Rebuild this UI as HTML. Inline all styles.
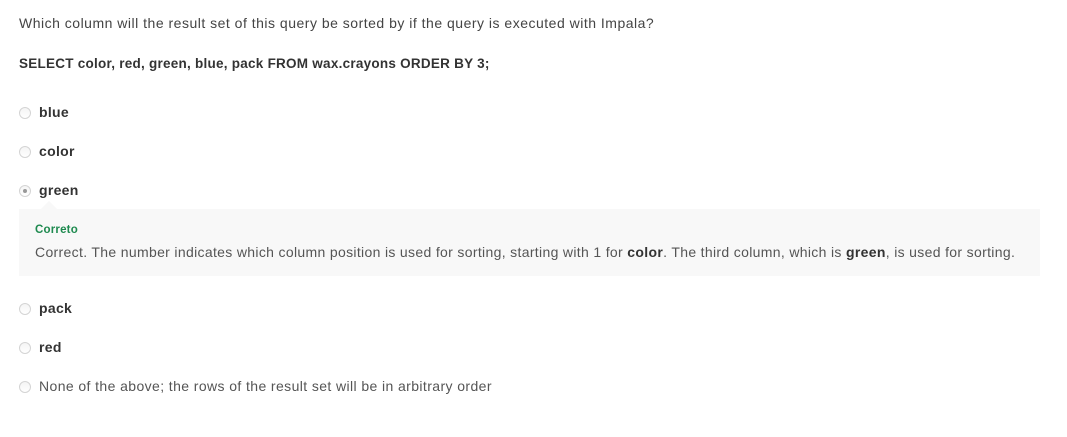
<!DOCTYPE html>
<html><head><style>
body{margin:0;background:#fff;font-family:"Liberation Sans",sans-serif;color:#333;width:1067px;height:437px;position:relative;overflow:hidden}
.t{position:absolute;white-space:nowrap;letter-spacing:0.4px}
.q{left:19px;top:15px;font-size:14px;color:#444;letter-spacing:0.5px}
.s{left:19px;top:56px;font-size:13.5px;font-weight:bold;color:#333;letter-spacing:0.25px}
.r{position:absolute;left:19px;width:12px;height:12px;border-radius:50%;border:1px solid #d4d4d4;background:linear-gradient(#f4f4f4,#fff);box-sizing:border-box}
.r.on::after{content:"";position:absolute;left:3px;top:3px;width:4px;height:4px;border-radius:50%;background:#999}
.o{left:39px;font-size:14px;font-weight:bold;color:#333;letter-spacing:0.3px}
.fb{position:absolute;left:19px;top:209px;width:1021px;height:67px;background:#f8f8f8}
.fb::before{content:"";position:absolute;left:22px;top:-8px;border-left:8px solid transparent;border-right:8px solid transparent;border-bottom:8px solid #f8f8f8}
.c{left:35px;top:224px;font-size:11.5px;font-weight:bold;color:#1e8a4f;letter-spacing:0.2px}
.e{left:35px;top:244px;font-size:14px;color:#555;letter-spacing:0.33px}
</style></head><body>
<div class="t q">Which column will the result set of this query be sorted by if the query is executed with Impala?</div>
<div class="t s">SELECT color, red, green, blue, pack FROM wax.crayons ORDER BY 3;</div>
<div class="r" style="top:107px"></div><div class="t o" style="top:104px">blue</div>
<div class="r" style="top:146px"></div><div class="t o" style="top:143px">color</div>
<div class="r on" style="top:185px"></div><div class="t o" style="top:182px">green</div>
<div class="fb"></div>
<div class="t c">Correto</div>
<div class="t e">Correct. The number indicates which column position is used for sorting, starting with 1 for <b style="color:#333">color</b>. The third column, which is <b style="color:#333">green</b>, is used for sorting.</div>
<div class="r" style="top:303px"></div><div class="t o" style="top:300px">pack</div>
<div class="r" style="top:342px"></div><div class="t o" style="top:339px">red</div>
<div class="r" style="top:381px"></div><div class="t o" style="top:378px;font-weight:normal;color:#555;letter-spacing:0.4px">None of the above; the rows of the result set will be in arbitrary order</div>
</body></html>
